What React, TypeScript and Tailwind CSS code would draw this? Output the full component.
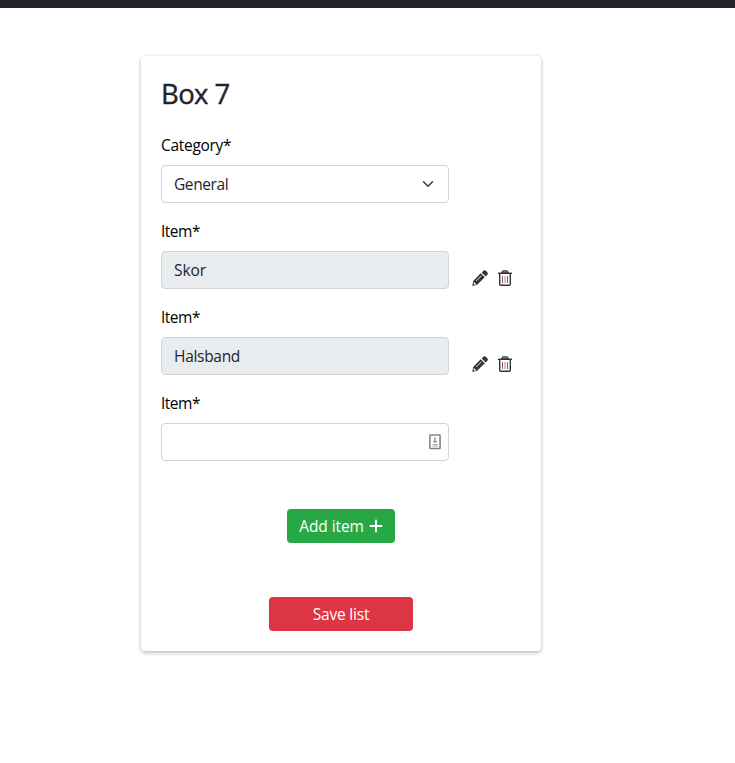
import { FaPlus } from "react-icons/fa6";

function Label({ children, tracking = "tracking-[-0.5px]" }: { children: string; tracking?: string }) {
  return <label className={`block h-6 text-[15.5px] leading-6 text-black ${tracking}`}>{children}</label>;
}

function Pencil() {
  return (
    <svg width="16" height="16" viewBox="0 0 16 16" fill="#303438">
      <path d="M11.300.8a1.800 1.800 0 0 1 2.500 0l1.500 1.500a1.800 1.800 0 0 1 0 2.500l-1.600 1.600-4-4zM8.700 3.200l4.100 4.100-7.700 7.500L.3 16l.9-5.100z" />
      <path d="m4.500 10.700 4.700-4.700" stroke="#fff" strokeWidth=".9" strokeLinecap="round" />
      <path d="m1.800 12.200 1 .2.200 1 1.200.2-.3.800-1.400.3-.9-.8z" fill="#fff" />
    </svg>
  );
}

function Trash() {
  return (
    <svg width="14" height="16" viewBox="0 0 14 16" fill="none">
      <path d="M3.500 3 4.600.8h4.800L10.500 3z" fill="#888" stroke="#303438" />
      <path d="M0 3.300h14" stroke="#303438" strokeWidth="1.400" />
      <path d="M1.700 3.500v10.700c0 .6.400 1.100 1.100 1.100h8.400c.7 0 1.100-.5 1.100-1.100V3.500" stroke="#303438" strokeWidth="1.400" />
      <path d="M4.500 6v7" stroke="#8a5968" />
      <path d="M7 6v7" stroke="#a58b65" />
      <path d="M9.500 6v7" stroke="#61658f" />
    </svg>
  );
}

function Item({ value, tracking }: { value: string; tracking: string }) {
  return (
    <div className="mb-4">
      <Label>Item*</Label>
      <div className="mt-2 flex">
        <div className={`flex h-[38px] w-72 items-center rounded border border-[#ced4da] bg-[#e9ecef] px-3 pt-0.5 text-[#212529] ${tracking}`}>{value}</div>
        <div className="ml-[23px] flex items-end gap-2.5 pb-[3px]"><Pencil /><Trash /></div>
      </div>
    </div>
  );
}

export default function App() {
  return (
    <div className="h-[763px] bg-white font-['Open_Sans','Noto_Sans',sans-serif] text-[15.5px] text-[#212529]">
      <div className="h-2 bg-[#212529]" />
      <main className="ml-[141px] mt-12 h-[595px] w-[400px] rounded px-5 pt-[19px] shadow-[0_2px_4px_rgba(0,0,0,0.22),0_0_3px_rgba(0,0,0,0.12)]">
        <h1 className="mb-5 h-[38px] text-[27.5px] font-medium leading-[37px] tracking-[-0.6px] [-webkit-text-stroke:0.4px_#212529]">Box 7</h1>
        <div className="mb-4">
          <Label tracking="tracking-[-0.3px]">Category*</Label>
          <div className="mt-2 flex h-[38px] w-72 items-center justify-between rounded border border-[#ced4da] px-3 tracking-[-0.4px]">
            <span className="pt-0.5">General</span>
            <svg width="16" height="12" viewBox="0 0 16 16" fill="none" stroke="#343a40" strokeWidth="2" strokeLinecap="round" strokeLinejoin="round"><path d="m2 5 6 6 6-6" /></svg>
          </div>
        </div>
        <Item value="Skor" tracking="tracking-[-0.1px]" />
        <Item value="Halsband" tracking="tracking-[-0.3px]" />
        <Label>Item*</Label>
        <div className="mt-2 flex h-[38px] w-72 items-center justify-end rounded border border-[#ced4da] pr-[7px]">
          <svg width="12" height="16" viewBox="0 0 12 16" fill="none" stroke="#858585"><rect x=".9" y="1" width="10.200" height="13.500" rx=".5" strokeWidth="1.600" /><path d="M6 3.500v2.200" strokeWidth="1.500" /><path d="M4.500 7.500h3" strokeWidth="2" /><path d="M3.500 10.500h5M3.500 12h5" stroke="#aaa" /></svg>
        </div>
        <button className="mx-auto mt-12 flex h-[34px] w-[108px] items-center justify-center gap-1 rounded bg-[#28a745] pl-px text-white"><span className="pt-0.5 tracking-[-0.1px]">Add item</span> <FaPlus size={16} /></button>
        <button className="mx-auto mt-[54px] block h-[34px] w-36 rounded bg-[#dc3545] pt-0.5 tracking-[-0.2px] text-white">Save list</button>
      </main>
    </div>
  );
}
